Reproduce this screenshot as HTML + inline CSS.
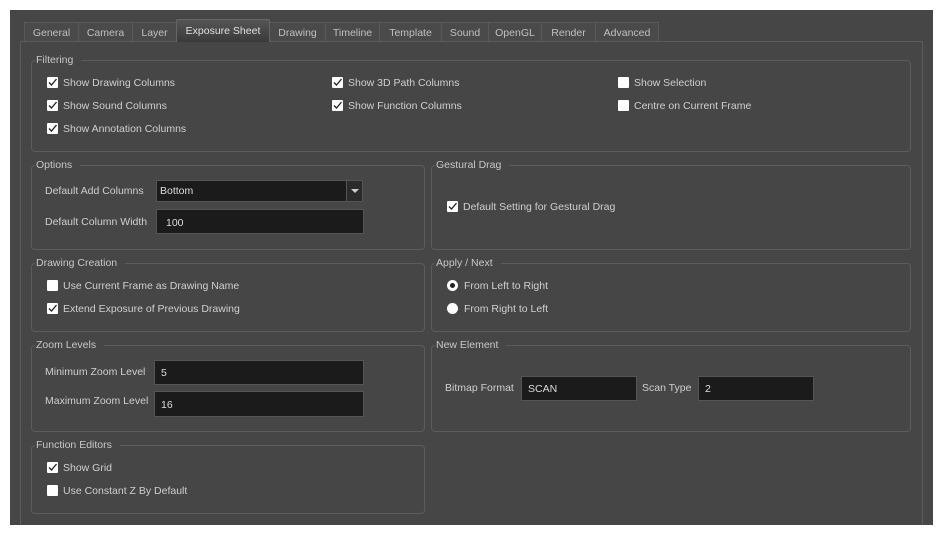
<!DOCTYPE html><html><head><style>
body{margin:0;width:943px;height:536px;background:#fff;position:relative;overflow:hidden;font-family:"Liberation Sans",sans-serif;font-size:10.5px;color:#cfcfcf}
.bg{position:absolute;left:10px;top:10px;width:923px;height:515px;background:#464646;overflow:hidden}
.pane{position:absolute;left:10px;top:31px;width:901px;height:500px;border:1px solid #5c5c5c;border-radius:2px}
.tab{position:absolute;top:22px;height:19px;line-height:21px;text-align:center;background:#4a4a4a;border:1px solid #5a5a5a;border-bottom:none;color:#c0c0c0;box-sizing:border-box}
.tab.a{top:19px;height:23px;line-height:22px;background:linear-gradient(#555,#3a3a3a);color:#e0e0e0;border-color:#666;border-radius:2px 2px 0 0}
.g{position:absolute;border:1px solid #5c5c5c;border-radius:4px;box-sizing:border-box}
.gt{position:absolute;top:-8px;left:3px;background:#464646;padding:0 8px 0 1px;color:#c8c8c8;line-height:14px}
.t{position:absolute;white-space:nowrap;line-height:14px;top:0}
.cb{position:absolute;width:11px;height:11px;background:#fff;border-radius:1px}
.cb svg{position:absolute;left:0;top:0}
.in{position:absolute;background:#1b1b1b;border:1px solid #555;box-sizing:border-box;padding-left:6px;color:#ddd}
.rb{position:absolute;width:11px;height:11px;border-radius:50%;background:#fff;box-sizing:border-box}
</style></head><body>
<div class="bg"><div class="pane"></div></div>
<div class="tab" style="left:24px;width:55px">General</div>
<div class="tab" style="left:78px;width:55px">Camera</div>
<div class="tab" style="left:132px;width:45px">Layer</div>
<div class="tab" style="left:269px;width:57px">Drawing</div>
<div class="tab" style="left:325px;width:55px">Timeline</div>
<div class="tab" style="left:379px;width:63px">Template</div>
<div class="tab" style="left:441px;width:48px">Sound</div>
<div class="tab" style="left:488px;width:54px">OpenGL</div>
<div class="tab" style="left:541px;width:55px">Render</div>
<div class="tab" style="left:595px;width:64px">Advanced</div>
<div class="tab a" style="left:176px;width:94px">Exposure Sheet</div>

<div class="g" style="left:31px;top:60px;width:880px;height:92px"><span class="gt">Filtering</span></div>
<div class="g" style="left:31px;top:165px;width:394px;height:85px"><span class="gt">Options</span></div>
<div class="g" style="left:431px;top:165px;width:480px;height:85px"><span class="gt">Gestural Drag</span></div>
<div class="g" style="left:31px;top:263px;width:394px;height:69px"><span class="gt">Drawing Creation</span></div>
<div class="g" style="left:431px;top:263px;width:480px;height:69px"><span class="gt">Apply / Next</span></div>
<div class="g" style="left:31px;top:345px;width:394px;height:87px"><span class="gt">Zoom Levels</span></div>
<div class="g" style="left:431px;top:345px;width:480px;height:87px"><span class="gt">New Element</span></div>
<div class="g" style="left:31px;top:445px;width:394px;height:69px"><span class="gt">Function Editors</span></div>

<svg width="0" height="0" style="position:absolute"><defs><symbol id="ck" viewBox="0 0 11 11"><path d="M2 5.5 L4.5 8 L9.5 2" fill="none" stroke="#222" stroke-width="1.3"/></symbol></defs></svg>

<div class="cb" style="left:47px;top:77px"><svg width="11" height="11"><use href="#ck"/></svg></div><div class="t" style="left:63px;top:76px">Show Drawing Columns</div>
<div class="cb" style="left:47px;top:100px"><svg width="11" height="11"><use href="#ck"/></svg></div><div class="t" style="left:63px;top:99px">Show Sound Columns</div>
<div class="cb" style="left:47px;top:123px"><svg width="11" height="11"><use href="#ck"/></svg></div><div class="t" style="left:63px;top:122px">Show Annotation Columns</div>
<div class="cb" style="left:332px;top:77px"><svg width="11" height="11"><use href="#ck"/></svg></div><div class="t" style="left:348px;top:76px">Show 3D Path Columns</div>
<div class="cb" style="left:332px;top:100px"><svg width="11" height="11"><use href="#ck"/></svg></div><div class="t" style="left:348px;top:99px">Show Function Columns</div>
<div class="cb" style="left:618px;top:77px"></div><div class="t" style="left:634px;top:76px">Show Selection</div>
<div class="cb" style="left:618px;top:100px"></div><div class="t" style="left:634px;top:99px">Centre on Current Frame</div>

<div class="t" style="left:45px;top:184px">Default Add Columns</div>
<div class="in" style="left:156px;top:180px;width:191px;height:22px;line-height:20px;padding-left:3px">Bottom</div>
<div class="in" style="left:346px;top:180px;width:17px;height:22px;padding:0;background:#2a2a2a"><div style="position:absolute;left:4px;top:8px;border-left:4px solid transparent;border-right:4px solid transparent;border-top:4px solid #ccc"></div></div>
<div class="t" style="left:45px;top:215px">Default Column Width</div>
<div class="in" style="left:156px;top:209px;width:208px;height:25px;line-height:26px;padding-left:9px">100</div>

<div class="cb" style="left:447px;top:201px"><svg width="11" height="11"><use href="#ck"/></svg></div><div class="t" style="left:463px;top:200px">Default Setting for Gestural Drag</div>

<div class="cb" style="left:47px;top:280px"></div><div class="t" style="left:63px;top:279px">Use Current Frame as Drawing Name</div>
<div class="cb" style="left:47px;top:303px"><svg width="11" height="11"><use href="#ck"/></svg></div><div class="t" style="left:63px;top:302px">Extend Exposure of Previous Drawing</div>

<div class="rb" style="left:447px;top:280px;border:3px solid #fff;background:#222"></div><div class="t" style="left:464px;top:279px">From Left to Right</div>
<div class="rb" style="left:447px;top:303px"></div><div class="t" style="left:464px;top:302px">From Right to Left</div>

<div class="t" style="left:45px;top:365px">Minimum Zoom Level</div>
<div class="in" style="left:154px;top:360px;width:210px;height:25px;line-height:25px">5</div>
<div class="t" style="left:45px;top:394px">Maximum Zoom Level</div>
<div class="in" style="left:154px;top:391px;width:210px;height:26px;line-height:27px">16</div>

<div class="t" style="left:445px;top:381px">Bitmap Format</div>
<div class="in" style="left:521px;top:376px;width:116px;height:25px;line-height:25px">SCAN</div>
<div class="t" style="left:642px;top:381px">Scan Type</div>
<div class="in" style="left:698px;top:376px;width:116px;height:25px;line-height:25px">2</div>

<div class="cb" style="left:47px;top:462px"><svg width="11" height="11"><use href="#ck"/></svg></div><div class="t" style="left:63px;top:461px">Show Grid</div>
<div class="cb" style="left:47px;top:485px"></div><div class="t" style="left:63px;top:484px">Use Constant Z By Default</div>
</body></html>
